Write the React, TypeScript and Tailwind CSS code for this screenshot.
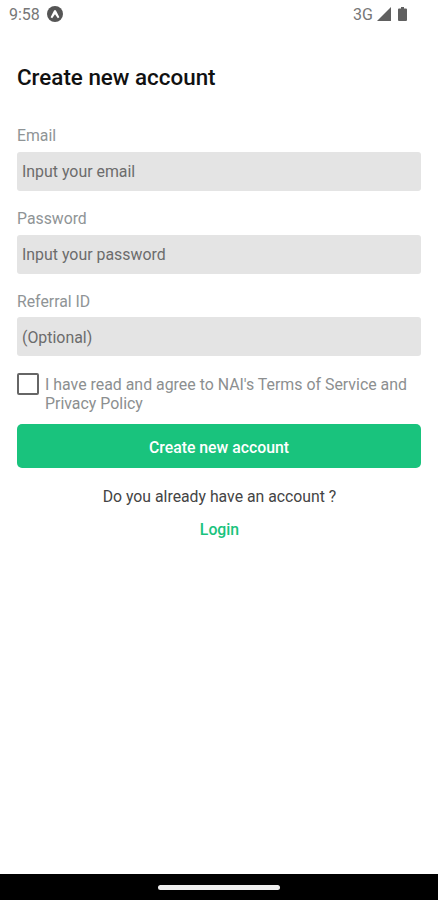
import { useState } from 'react'

type FieldProps = {
  label: string
  placeholder: string
  type?: string
}

export default function App() {
  const [agreed, setAgreed] = useState(false)

  return (
    <div className="flex h-[900px] w-[438px] flex-col overflow-hidden bg-white font-[Roboto,sans-serif]">
      <StatusBar />
      <main className="flex flex-1 flex-col px-[17px] pt-[34px]">
        <h1 className="text-[22.4px] font-medium leading-[30px] text-[#111]">Create new account</h1>
        <form className="mt-[34px] flex flex-col">
          <Field label="Email" placeholder="Input your email" type="email" />
          <Field label="Password" placeholder="Input your password" type="password" />
          <Field label="Referral ID" placeholder="(Optional)" />
          <label className="-mt-px flex gap-[6px] text-[15.9px] leading-[19px] text-[#8c8f90]">
            <input
              type="checkbox"
              checked={agreed}
              onChange={() => setAgreed(!agreed)}
              className="size-[22px] shrink-0 appearance-none rounded-[2px] border-2 border-[#666] checked:bg-[#19c37d]"
            />
            <span className="pt-[2px]">
              I have read and agree to NAI's Terms of Service and
              <br />
              Privacy Policy
            </span>
          </label>
          <button type="button" className="mt-[11px] h-11 rounded-[5px] bg-[#19c37d] pt-[3px] text-[15.8px] font-medium text-white">
            Create new account
          </button>
        </form>
        <p className="mt-[19px] pl-px text-center text-[15.8px] leading-[20px] text-[#444]">Do you already have an account ?</p>
        <a href="#" className="mt-[13px] self-center pl-px text-[15.8px] font-medium leading-[20px] text-[#19c37d]">
          Login
        </a>
      </main>
      <footer className="flex h-[26px] items-center justify-center bg-black">
        <div className="h-[5px] w-[122px] rounded-full bg-[#eee]" />
      </footer>
    </div>
  )
}

function Field({ label, placeholder, type = 'text' }: FieldProps) {
  return (
    <label className="mb-[18px] block">
      <span className="block text-[15.8px] leading-[20px] text-[#8f9496]">{label}</span>
      <input
        type={type}
        placeholder={placeholder}
        className="mt-[5.75px] block h-[39px] w-full rounded-[3px] bg-[#e4e4e4] px-[5px] pt-px text-[15.9px] placeholder:text-[#6c6c6c]"
      />
    </label>
  )
}

function StatusBar() {
  return (
    <header className="flex h-[28px] items-center pl-[9px] pr-[31px] text-[16px] text-[#777]">
      <span className="pt-px">9:58</span>
      <svg viewBox="0 0 16 16" className="ml-[7px] size-4">
        <circle cx="8" cy="8" r="8" fill="#555" />
        <path d="M3.600 11.200 6.800 5q1.200-2 2.400 0l3.200 6.200-1.600 1L8 8.200l-2.800 4z" fill="#fff" />
      </svg>
      <span className="ml-auto pt-px">3G</span>
      <svg viewBox="0 0 14 14" className="ml-1 size-[14px]">
        <path d="M14 0v14H0z" fill="#606060" />
      </svg>
      <svg viewBox="0 0 9 14" className="ml-[7px] h-[14px] w-[9px]">
        <path d="M3 0h3v1.500h2q1 0 1 1V13q0 1-1 1H1q-1 0-1-1V2.500q0-1 1-1h2z" fill="#606060" />
      </svg>
    </header>
  )
}
